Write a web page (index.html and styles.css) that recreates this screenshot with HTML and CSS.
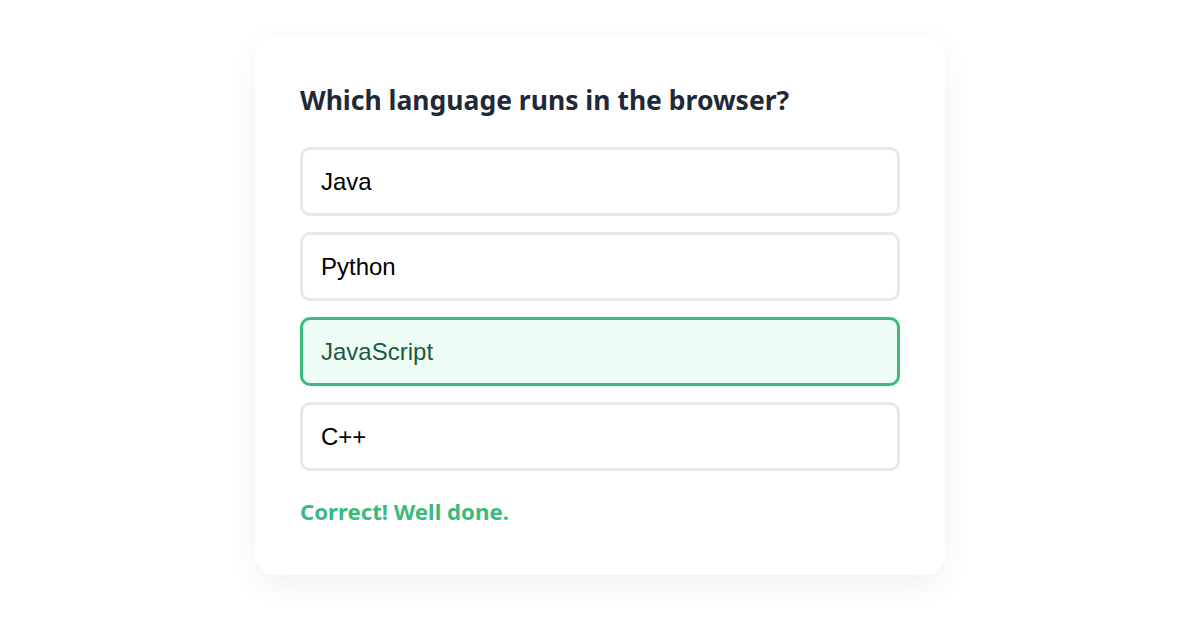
FILE: index.html
```html
<!DOCTYPE html>
<html lang="en">
<head>
<meta charset="utf-8">
<title>Quiz</title>
<link rel="stylesheet" href="styles.css">
</head>
<body>
<main class="page">
  <section class="card">
    <h2 class="question">Which language runs in the browser?</h2>
    <div class="options">
      <button class="option">Java</button>
      <button class="option">Python</button>
      <button class="option option-correct">JavaScript</button>
      <button class="option">C++</button>
    </div>
    <p class="feedback">Correct! Well done.</p>
  </section>
</main>
</body>
</html>
```

FILE: styles.css
```css
html, body {
  margin: 0;
  padding: 0;
  background: #ffffff;
}
.page {
  display: flex;
  justify-content: center;
  align-items: flex-start;
  box-sizing: border-box;
  min-height: 100vh;
  padding-top: 35px;
}
.card {
  width: 600px;
  padding: 45px 45px 48px;
  background: #ffffff;
  border-radius: 20px;
  box-shadow: 0 10px 30px rgba(0, 0, 0, 0.06);
}
.question {
  margin: 0 0 26px;
  font-family: "Noto Sans", sans-serif;
  font-weight: 700;
  font-size: 26.5px;
  line-height: 41px;
  color: #1f2937;
}
.options {
  display: flex;
  flex-direction: column;
  gap: 16px;
}
.option {
  display: block;
  width: 100%;
  text-align: left;
  box-sizing: border-box;
  height: 69px;
  padding: 0 18px;
  border: 3px solid #e5e7eb;
  border-radius: 10px;
  background: #ffffff;
  font-family: "Liberation Sans", Arial, sans-serif;
  font-size: 24px;
  color: #000000;
}
.option-correct {
  border-color: #3cb97e;
  background: #edfcf4;
  color: #1c5a40;
}
.feedback {
  margin: 26px 0 0;
  font-family: "Noto Sans", sans-serif;
  font-weight: 700;
  font-size: 22.2px;
  line-height: 30px;
  color: #3cb97e;
}
```
